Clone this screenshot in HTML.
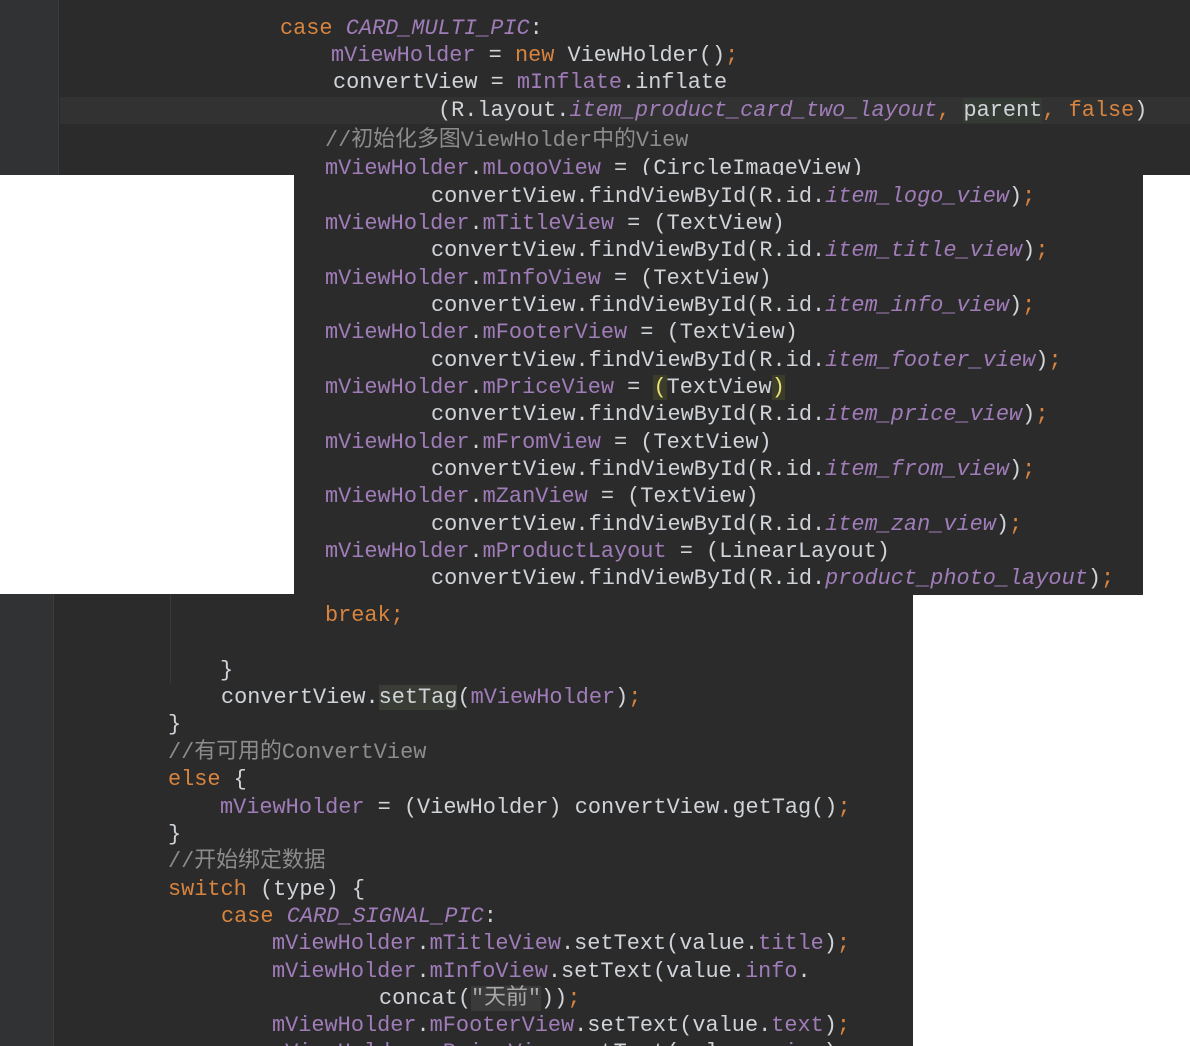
<!DOCTYPE html>
<html><head><meta charset="utf-8"><style>
html,body{margin:0;padding:0;background:#fff;width:1190px;height:1046px;overflow:hidden;position:relative}
.p{position:absolute;background:#2b2b2c;overflow:hidden}
.l{position:absolute;white-space:pre;font-family:"Liberation Mono","Noto Sans CJK SC",monospace;font-size:21.9px;line-height:28px;height:28px;color:#d0d4d8;margin-top:2px}
.k{color:#d8843e}.f{color:#a07cb8}.c{color:#a07cb8;font-style:italic}.cm{color:#8c8c8c}.y{color:#d8843e}
.hl{background:#3a3d36}
</style></head><body>
<div class="p" style="left:0;top:0;width:1190px;height:175px">
 <div style="position:absolute;left:0;top:0;width:58px;height:175px;background:#313233;border-right:1px solid #3c3c3c"></div>
 <div style="position:absolute;left:60px;top:97px;width:1130px;height:27px;background:#323232"></div>
 <div class="l" style="left:280px;top:13px"><span class="k">case</span> <span class="c">CARD_MULTI_PIC</span>:</div>
 <div class="l" style="left:331px;top:40px"><span class="f">mViewHolder</span> = <span class="k">new</span> ViewHolder()<span class="y">;</span></div>
 <div class="l" style="left:333px;top:67px">convertView = <span class="f">mInflate</span>.inflate</div>
 <div class="l" style="left:438px;top:95px">(R.layout.<span class="c">item_product_card_two_layout</span><span class="y">,</span> <span style="background:#343a34">parent</span><span class="y">,</span> <span class="k">false</span>)</div>
 <div class="l cm" style="left:325px;top:125px">//初始化多图ViewHolder中的View</div>
 <div class="l" style="left:325px;top:153px"><span class="f">mViewHolder</span>.<span class="f">mLogoView</span> = (CircleImageView)</div>
</div>
<div class="p" style="left:294px;top:175px;width:849px;height:420px">
 <div class="l" style="left:137px;top:6px">convertView.findViewById(R.id.<span class="c">item_logo_view</span>)<span class="y">;</span></div>
 <div class="l" style="left:31px;top:33px"><span class="f">mViewHolder</span>.<span class="f">mTitleView</span> = (TextView)</div>
 <div class="l" style="left:137px;top:60px">convertView.findViewById(R.id.<span class="c">item_title_view</span>)<span class="y">;</span></div>
 <div class="l" style="left:31px;top:88px"><span class="f">mViewHolder</span>.<span class="f">mInfoView</span> = (TextView)</div>
 <div class="l" style="left:137px;top:115px">convertView.findViewById(R.id.<span class="c">item_info_view</span>)<span class="y">;</span></div>
 <div class="l" style="left:31px;top:142px"><span class="f">mViewHolder</span>.<span class="f">mFooterView</span> = (TextView)</div>
 <div class="l" style="left:137px;top:170px">convertView.findViewById(R.id.<span class="c">item_footer_view</span>)<span class="y">;</span></div>
 <div class="l" style="left:31px;top:197px"><span class="f">mViewHolder</span>.<span class="f">mPriceView</span> = <span style="background:#3b3d2a;color:#e8e070">(</span>TextView<span style="background:#3b3d2a;color:#e8e070">)</span></div>
 <div class="l" style="left:137px;top:224px">convertView.findViewById(R.id.<span class="c">item_price_view</span>)<span class="y">;</span></div>
 <div class="l" style="left:31px;top:252px"><span class="f">mViewHolder</span>.<span class="f">mFromView</span> = (TextView)</div>
 <div class="l" style="left:137px;top:279px">convertView.findViewById(R.id.<span class="c">item_from_view</span>)<span class="y">;</span></div>
 <div class="l" style="left:31px;top:306px"><span class="f">mViewHolder</span>.<span class="f">mZanView</span> = (TextView)</div>
 <div class="l" style="left:137px;top:334px">convertView.findViewById(R.id.<span class="c">item_zan_view</span>)<span class="y">;</span></div>
 <div class="l" style="left:31px;top:361px"><span class="f">mViewHolder</span>.<span class="f">mProductLayout</span> = (LinearLayout)</div>
 <div class="l" style="left:137px;top:388px">convertView.findViewById(R.id.<span class="c">product_photo_layout</span>)<span class="y">;</span></div>
</div>
<div class="p" style="left:0;top:594px;width:913px;height:452px">
 <div style="position:absolute;left:0;top:0;width:53px;height:452px;background:#313233;border-right:1px solid #3c3c3c"></div>
 <div style="position:absolute;left:170px;top:0;width:1px;height:90px;background:#3a3a3a"></div>
 <div class="l" style="left:325px;top:6px"><span class="k">break;</span></div>
 <div class="l" style="left:220px;top:61px">}</div>
 <div class="l" style="left:221px;top:88px">convertView.<span class="hl">setTag</span>(<span class="f">mViewHolder</span>)<span class="y">;</span></div>
 <div class="l" style="left:168px;top:115px">}</div>
 <div class="l cm" style="left:168px;top:143px">//有可用的ConvertView</div>
 <div class="l" style="left:168px;top:170px"><span class="k">else</span> {</div>
 <div class="l" style="left:220px;top:198px"><span class="f">mViewHolder</span> = (ViewHolder) convertView.getTag()<span class="y">;</span></div>
 <div class="l" style="left:168px;top:225px">}</div>
 <div class="l cm" style="left:168px;top:252px">//开始绑定数据</div>
 <div class="l" style="left:168px;top:280px"><span class="k">switch</span> (type) {</div>
 <div class="l" style="left:221px;top:307px"><span class="k">case</span> <span class="c">CARD_SIGNAL_PIC</span>:</div>
 <div class="l" style="left:272px;top:334px"><span class="f">mViewHolder</span>.<span class="f">mTitleView</span>.setText(value.<span class="f">title</span>)<span class="y">;</span></div>
 <div class="l" style="left:272px;top:362px"><span class="f">mViewHolder</span>.<span class="f">mInfoView</span>.setText(value.<span class="f">info</span>.</div>
 <div class="l" style="left:379px;top:389px">concat(<span style="background:#3a3a3a;color:#a8a8a8">"天前"</span>))<span class="y">;</span></div>
 <div class="l" style="left:272px;top:416px"><span class="f">mViewHolder</span>.<span class="f">mFooterView</span>.setText(value.<span class="f">text</span>)<span class="y">;</span></div>
 <div class="l" style="left:272px;top:443px"><span class="f">mViewHolder</span>.<span class="f">mPriceView</span>.setText(value.<span class="f">price</span>)<span class="y">;</span></div>
</div>
</body></html>
